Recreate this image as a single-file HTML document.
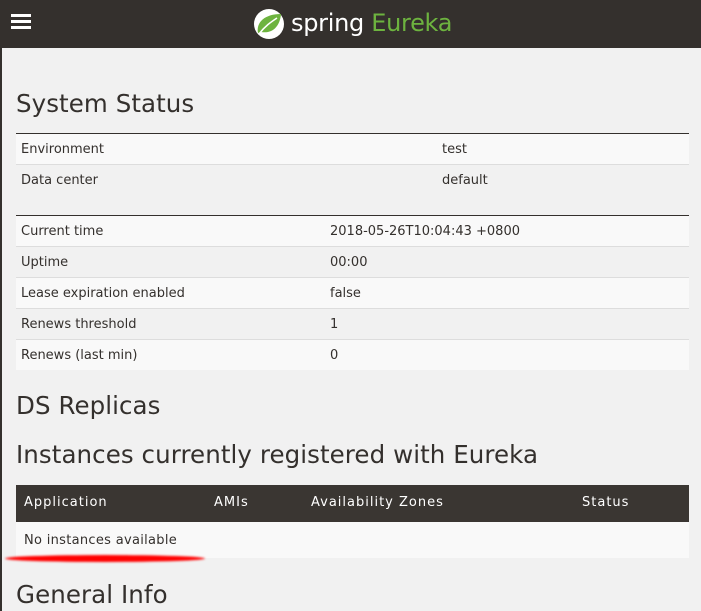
<!DOCTYPE html><html><head><style>
body{margin:0;width:701px;height:611px;overflow:hidden;background:#f1f1f1;font-family:"DejaVu Sans","Liberation Sans",sans-serif;color:#34302d;position:relative}
.nav{height:48px;background:#34302d;position:relative}
.lb{position:absolute;left:0;top:48px;width:2px;height:563px;background:#34302d}
h2{font-weight:normal;font-size:24.5px;margin:0;position:absolute;left:16px;letter-spacing:0.08px}
table{position:absolute;left:16px;width:673px;border-collapse:collapse;font-size:13px}
td{height:30px;padding:0 0 0 5px;border-top:1px solid #ddd}
tr:first-child td{border-top:1px solid #34302d}
tr:nth-child(odd) td{background:#f9f9f9}
</style></head><body>
<div class="nav">
<div style="position:absolute;left:11px;top:14px;width:20px;height:3px;background:#fff;box-shadow:0 6px 0 #fff,0 12px 0 #fff"></div>
<svg style="position:absolute;left:253px;top:8px" width="32" height="32" viewBox="0 0 32 32"><circle cx="16" cy="16" r="15" fill="#fff"/><path d="M5 25 C3 14 12 6 28 6 C27 18 20 26 8 24 Z" fill="#6db33f"/><path d="M6 26 C12 18 18 14 24 10" stroke="#fff" stroke-width="1.5" fill="none"/></svg>
<div style="position:absolute;left:291px;top:9px;font-size:24px;font-family:'DejaVu Sans',sans-serif;color:#fff;letter-spacing:-0.3px">spring <span style="color:#6db33f">Eureka</span></div>
</div>
<div class="lb"></div>
<h2 style="top:89px">System Status</h2>
<table style="top:133px"><tr><td style="width:416px">Environment</td><td>test</td></tr><tr><td>Data center</td><td>default</td></tr></table>
<table style="top:215px"><tr><td style="width:304px">Current time</td><td>2018-05-26T10:04:43 +0800</td></tr><tr><td>Uptime</td><td>00:00</td></tr><tr><td>Lease expiration enabled</td><td>false</td></tr><tr><td>Renews threshold</td><td>1</td></tr><tr><td>Renews (last min)</td><td>0</td></tr></table>
<h2 style="top:391px">DS Replicas</h2>
<h2 style="top:440px">Instances currently registered with Eureka</h2>
<div style="position:absolute;left:16px;top:485px;width:673px;height:37px;background:#3a3632;color:#fff;font-size:13px;letter-spacing:1px">
<span style="position:absolute;left:8px;top:10px">Application</span><span style="position:absolute;left:198px;top:10px">AMIs</span><span style="position:absolute;left:295px;top:10px">Availability Zones</span><span style="position:absolute;left:566px;top:10px">Status</span></div>
<div style="position:absolute;left:16px;top:522px;width:673px;height:36px;background:#f9f9f9;font-size:13px;letter-spacing:0.3px"><span style="position:absolute;left:8px;top:11px">No instances available</span></div>
<div style="position:absolute;left:5px;top:555px;width:200px;height:7px;border-radius:50%;background:#f00;filter:blur(1px)"></div>
<h2 style="top:580px">General Info</h2>
</body></html>
